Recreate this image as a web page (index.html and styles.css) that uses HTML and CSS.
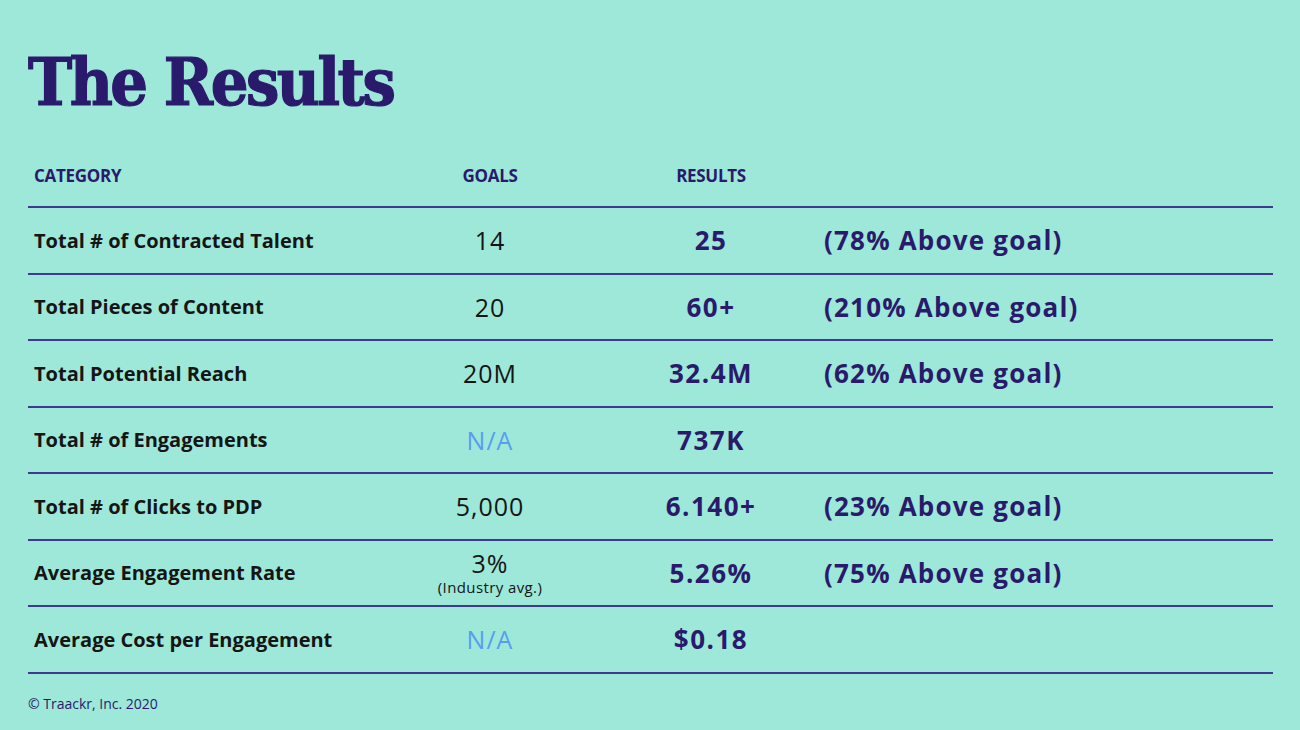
FILE: index.html
```html
<!DOCTYPE html>
<html lang="en">
<head>
<meta charset="utf-8">
<title>The Results</title>
<link rel="stylesheet" href="styles.css">
</head>
<body>
<main class="slide">
  <h1 class="title">The Results</h1>
  <div class="table">
    <div class="row head">
      <div class="cell cat">CATEGORY</div>
      <div class="cell goal">GOALS</div>
      <div class="cell res">RESULTS</div>
      <div class="cell note"></div>
    </div>
    <div class="row">
      <div class="cell cat">Total # of Contracted Talent</div>
      <div class="cell goal">14</div>
      <div class="cell res">25</div>
      <div class="cell note">(78% Above goal)</div>
    </div>
    <div class="row">
      <div class="cell cat">Total Pieces of Content</div>
      <div class="cell goal">20</div>
      <div class="cell res">60+</div>
      <div class="cell note">(210% Above goal)</div>
    </div>
    <div class="row">
      <div class="cell cat">Total Potential Reach</div>
      <div class="cell goal">20M</div>
      <div class="cell res">32.4M</div>
      <div class="cell note">(62% Above goal)</div>
    </div>
    <div class="row">
      <div class="cell cat">Total # of Engagements</div>
      <div class="cell goal na">N/A</div>
      <div class="cell res">737K</div>
      <div class="cell note"></div>
    </div>
    <div class="row">
      <div class="cell cat">Total # of Clicks to PDP</div>
      <div class="cell goal">5,000</div>
      <div class="cell res">6.140+</div>
      <div class="cell note">(23% Above goal)</div>
    </div>
    <div class="row">
      <div class="cell cat">Average Engagement Rate</div>
      <div class="cell goal stack"><span class="big">3%</span><span class="small">(Industry avg.)</span></div>
      <div class="cell res">5.26%</div>
      <div class="cell note">(75% Above goal)</div>
    </div>
    <div class="row">
      <div class="cell cat">Average Cost per Engagement</div>
      <div class="cell goal na">N/A</div>
      <div class="cell res">$0.18</div>
      <div class="cell note"></div>
    </div>
  </div>
  <footer class="footer">© Traackr, Inc. 2020</footer>
</main>
</body>
</html>
```
FILE: styles.css
```css
html, body {
  margin: 0;
  padding: 0;
}
body {
  background: #9de8d8;
  width: 1300px;
  height: 730px;
  overflow: hidden;
  font-family: "Open Sans", Lato, sans-serif;
}
.slide {
  padding: 42px 27px 0 28px;
}
.title {
  margin: 0;
  font-family: "DejaVu Serif Condensed", "DejaVu Serif", serif;
  font-weight: 700;
  font-size: 66px;
  line-height: 80px;
  color: #2a1a6b;
  letter-spacing: -2.5px;
  -webkit-text-stroke: 1.2px #2a1a6b;
}
.table {
  margin-top: 23px;
}
.row {
  display: grid;
  grid-template-columns: 352px 220px 222px 1fr;
  align-items: center;
  height: 64.5px;
  border-bottom: 2px solid #3e3b8c;
}
.row.head {
  height: 61px;
}
.cell {
  color: #151515;
}
.head .cell {
  font-size: 17px;
  font-weight: 700;
  letter-spacing: -0.3px;
  color: #2a1a6b;
}
.cat {
  padding-left: 6px;
  font-size: 20px;
  font-weight: 700;
  color: #151515;
}
.goal {
  text-align: center;
  font-size: 25px;
  letter-spacing: 1px;
}
.goal.na {
  color: #5a9cf0;
}
.stack {
  display: flex;
  flex-direction: column;
  align-items: center;
}
.stack .big {
  font-size: 25px;
  line-height: 26px;
}
.stack .small {
  font-size: 15px;
  line-height: 18px;
  letter-spacing: 0.4px;
  margin-top: 2px;
}
.res {
  text-align: center;
  font-size: 26px;
  font-weight: 700;
  letter-spacing: 1.5px;
  color: #2a1a6b;
}
.note {
  padding-left: 2px;
  font-size: 26px;
  font-weight: 700;
  letter-spacing: 1.2px;
  color: #2a1a6b;
}
.head .res, .head .goal {
  font-size: 17px;
  letter-spacing: -0.3px;
}
.footer {
  margin-top: 20px;
  font-size: 14px;
  color: #2a1a6b;
}
```
